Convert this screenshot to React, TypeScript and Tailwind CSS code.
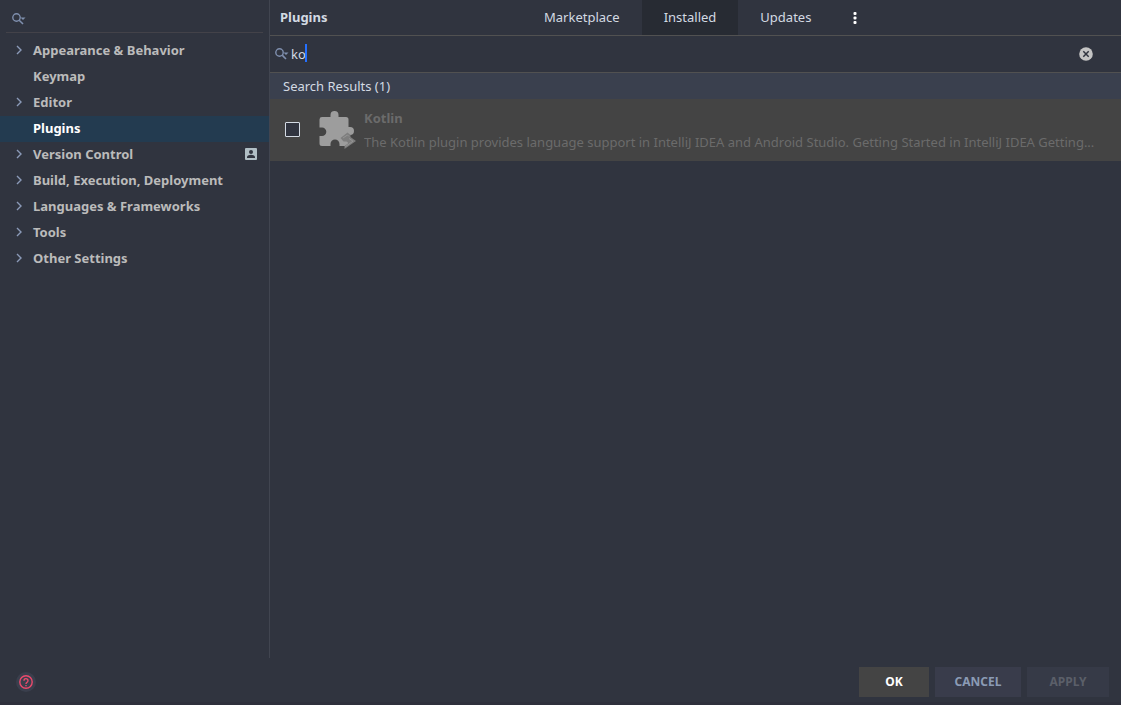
import React, { useState } from 'react';

const settings = [
  { name: 'Appearance & Behavior', group: true },
  { name: 'Keymap', group: false },
  { name: 'Editor', group: true },
  { name: 'Plugins', group: false },
  { name: 'Version Control', group: true, project: true },
  { name: 'Build, Execution, Deployment', group: true },
  { name: 'Languages & Frameworks', group: true },
  { name: 'Tools', group: true },
  { name: 'Other Settings', group: true },
];

const tabs = ['Marketplace', 'Installed', 'Updates'];

function SearchIcon() {
  return (
    <svg width="16" height="16" viewBox="0 0 16 16" fill="none" className="shrink-0">
      <circle cx="5.5" cy="6.5" r="3.7" stroke="#7f8fae" strokeWidth="1.4" />
      <path d="M8.2 9.2 12 13" stroke="#7f8fae" strokeWidth="1.6" />
      <path d="M9.5 6.5h5L12 9z" fill="#7f8fae" />
    </svg>
  );
}

function ChevronIcon() {
  return (
    <svg width="8" height="10" viewBox="0 0 8 10" fill="none">
      <path d="M2 1l4 4-4 4" stroke="#8b9ab8" strokeWidth="1.4" />
    </svg>
  );
}

function ProjectIcon() {
  return (
    <svg width="12" height="12" viewBox="0 0 12 12">
      <rect width="12" height="12" rx="1" fill="#b0bec5" />
      <circle cx="6" cy="4" r="2" fill="#30343f" />
      <path d="M2 10V9c0-1.4 2.6-2.2 4-2.2s4 .8 4 2.2v1z" fill="#30343f" />
    </svg>
  );
}

function PluginIcon() {
  return (
    <svg width="40" height="40" viewBox="0 0 40 40">
      <path
        d="M4 7h8.5V5a4 4 0 0 1 8 0v2H28a2.500 2.500 0 0 1 2.500 2.500V17H32a4 4 0 0 1 0 8h-1.500v8.500A2.500 2.500 0 0 1 28 36h-6.500v-2a4.500 4.500 0 0 0-9 0v2H4a2.500 2.500 0 0 1-2.500-2.500V26H4a4.300 4.300 0 0 0 0-8.600H1.500v-8A2.500 2.500 0 0 1 4 7z"
        fill="#9d9d9d"
      />
      <path d="M22.500 28l7-5.500 3 2.500v2l5.500 4-11.500 8v-3l4-3-2-1.500h-3z" fill="#7e7e7e" />
      <path d="M25 28l4.500-3 1.500 1.500M27.500 36.500l7.500-5.300-4-2.700" stroke="#959595" strokeWidth="1" fill="none" />
    </svg>
  );
}

export default function App() {
  const [selected, setSelected] = useState('Plugins');
  const [tab, setTab] = useState('Installed');
  const [query, setQuery] = useState('ko');

  return (
    <div className="flex min-h-screen flex-col bg-[#30343f] font-['Noto_Sans','Open_Sans',sans-serif] text-[13px] leading-5 text-[#d3dae3]">
      <div className="flex flex-1">
        {/* Settings tree */}
        <aside className="w-[270px] shrink-0 border-r border-[#414550]">
          <label className="mx-1.5 flex h-[33px] items-center border-b border-[#434249] pt-1.5 pl-[5px]">
            <SearchIcon />
            <input
              type="text"
              aria-label="Search settings"
              className="min-w-0 flex-1 bg-transparent outline-none"
            />
          </label>
          <nav className="pt-[5px]">
            {settings.map((item) => (
              <button
                key={item.name}
                onClick={() => setSelected(item.name)}
                className={`flex h-[26px] w-full items-center pr-3 pb-0.5 pl-[15px] text-left font-bold ${
                  selected === item.name ? 'bg-[#233b50] text-white' : 'text-[#bbbbbb]'
                }`}
              >
                <span className="w-[18px] shrink-0">{item.group && <ChevronIcon />}</span>
                <span className="flex-1 whitespace-nowrap">{item.name}</span>
                {item.project && <ProjectIcon />}
              </button>
            ))}
          </nav>
        </aside>

        {/* Plugins page */}
        <main className="min-w-0 flex-1">
          <header className="flex h-9 border-b border-[#515151]">
            <h1 className="w-[252px] pt-[7px] pl-2.5 font-bold">Plugins</h1>
            {tabs.map((name) => (
              <button
                key={name}
                onClick={() => setTab(name)}
                className={`px-[22px] pb-0.5 ${tab === name ? 'bg-[#272b33]' : ''}`}
              >
                {name}
              </button>
            ))}
            <button aria-label="More" className="px-5">
              <svg width="4" height="12" viewBox="0 0 4 12" fill="#ffffff">
                <rect x=".5" y="0" width="3" height="3" rx="1" />
                <rect x=".5" y="4.5" width="3" height="3" rx="1" />
                <rect x=".5" y="9" width="3" height="3" rx="1" />
              </svg>
            </button>
          </header>

          <div className="flex h-[37px] items-center border-b border-[#515151] pr-7 pl-1">
            <SearchIcon />
            <div className="relative ml-px flex-1">
              <input
                type="text"
                aria-label="Search plugins"
                value={query}
                onChange={(e) => setQuery(e.target.value)}
                className="block w-full bg-transparent outline-none"
              />
              <span className="absolute top-0 left-[14px] h-[18px] w-0.5 bg-[#2470ff]" />
            </div>
            <button aria-label="Clear" onClick={() => setQuery('')}>
              <svg width="14" height="14" viewBox="0 0 14 14">
                <circle cx="7" cy="7" r="6.8" fill="#c4c4c4" />
                <path d="M4.3 4.3l5.4 5.4M9.7 4.3L4.3 9.7" stroke="#30343f" strokeWidth="1.5" />
              </svg>
            </button>
          </div>

          <h2 className="h-[26px] bg-[#3a404e] pt-[3px] pl-[13px]">Search Results (1)</h2>
          <div className="flex h-[62px] items-center bg-[#444444] pb-0.5 pl-[15px] text-[#6b6b6b]">
            <input
              type="checkbox"
              aria-label="Enable Kotlin"
              className="size-[15px] shrink-0 appearance-none rounded-[1px] border border-[#d3dae3] bg-[#30343f] checked:bg-[#d3dae3]"
            />
            <div className="ml-[18px] shrink-0 pt-0.5">
              <PluginIcon />
            </div>
            <div className="ml-1.5 min-w-0 pt-0.5">
              <h3 className="h-6 font-bold">Kotlin</h3>
              <p className="truncate">
                The Kotlin plugin provides language support in IntelliJ IDEA and Android Studio. Getting Started in IntelliJ IDEA Getting...
              </p>
            </div>
          </div>
        </main>
      </div>

      {/* Dialog buttons */}
      <footer className="flex h-[47px] items-center gap-1.5 border-b-3 border-[#2e303c] pt-1 pr-3 pl-4 font-bold">
        <button
          aria-label="Help"
          className="mr-auto flex size-5 items-center justify-center rounded-full bg-[#3a3f4d]"
        >
          <svg width="14" height="14" viewBox="0 0 14 14" fill="none" stroke="#ec4a6c" strokeWidth="1.4">
            <circle cx="7" cy="7" r="6.2" />
            <path d="M5 5.7a2 2 0 1 1 3.2 1.5C7.5 7.7 7 8 7 9M7 9.9v1.3" />
          </svg>
        </button>
        <button className="h-[30px] w-[70px] bg-[#444444] text-xs text-white">OK</button>
        <button className="h-[30px] w-[86px] bg-[#393c4b] text-xs text-[#8b9bb5]">CANCEL</button>
        <button disabled className="h-[30px] w-[82px] bg-[#363a47] text-xs text-[#5b5f69]">
          APPLY
        </button>
      </footer>
    </div>
  );
}
